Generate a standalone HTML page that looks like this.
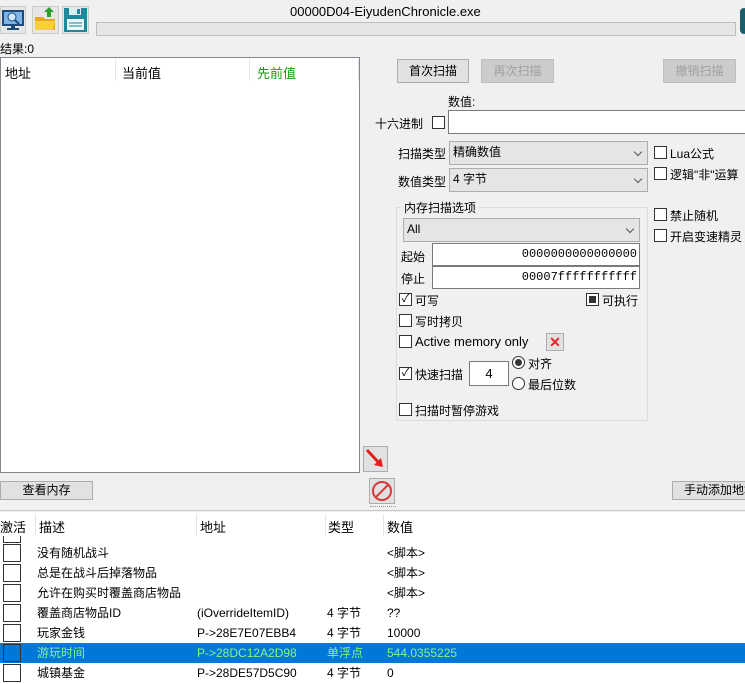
<!DOCTYPE html>
<html><head><meta charset="utf-8">
<style>
*{margin:0;padding:0;box-sizing:border-box}
body{width:745px;height:684px;overflow:hidden;background:#f0f0f0;position:relative;font-family:"Liberation Sans","Noto Sans CJK SC",sans-serif;font-size:12px;color:#000}
.a{position:absolute;white-space:nowrap}
.btn{position:absolute;background:#e1e1e1;border:1px solid #adadad;text-align:center;line-height:22px;white-space:nowrap;overflow:hidden}
.dis{color:#a0a0a0;background:#cccccc;border-color:#bfbfbf}
.inp{position:absolute;background:#fff;border:1px solid #7a7a7a}
.cb{position:absolute;width:13px;height:13px;border:1px solid #333;background:#fff}
.combo{position:absolute;background:#e5e5e5;border:1px solid #adadad;line-height:21px;padding-left:3px}
.combo:after{content:"";position:absolute;right:6px;top:7px;width:5px;height:5px;border-right:1px solid #555;border-bottom:1px solid #555;transform:rotate(45deg)}
.row{position:absolute;left:0;width:745px;height:20px;line-height:20px}
.row .c{position:absolute;left:3px;top:1px;width:18px;height:18px;border:1px solid #333;background:#fff}
.row span{position:absolute}
</style></head><body>
<div class="a" style="left:0;top:6px;width:26px;height:28px;background:#e6e6e6;border:1px solid #ccc">
<svg width="24" height="26" viewBox="0 0 24 26"><rect x="2" y="4" width="20" height="14" fill="#7fb4e6" stroke="#1d4c7c" stroke-width="2"/><circle cx="11" cy="10" r="4" fill="#cde8ff" stroke="#1d4c7c"/><line x1="14" y1="13" x2="18" y2="17" stroke="#1d4c7c" stroke-width="2"/><rect x="10" y="18" width="4" height="3" fill="#1d4c7c"/><rect x="6" y="21" width="12" height="2" fill="#1d4c7c"/></svg></div>
<div class="a" style="left:32px;top:6px;width:27px;height:28px;background:#e6e6e6;border:1px solid #ccc">
<svg width="25" height="26" viewBox="0 0 25 26"><path d="M2 10h8l2 2h10v11H2z" fill="#e6a817"/><path d="M2 14h20l-2 9H2z" fill="#f7cf3c"/><path d="M14 10V5h-3l5-5 5 5h-3v5z" fill="#2ca02c"/></svg></div>
<div class="a" style="left:62px;top:6px;width:27px;height:28px;background:#e6e6e6;border:1px solid #ccc">
<svg width="25" height="26" viewBox="0 0 25 26"><rect x="1" y="1" width="23" height="24" fill="#1c8a9a"/><rect x="6" y="1" width="12" height="7" fill="#d9eef0"/><rect x="14" y="2" width="3" height="5" fill="#1c8a9a"/><rect x="4" y="12" width="17" height="11" fill="#e8f6f6"/><line x1="6" y1="16" x2="19" y2="16" stroke="#1c8a9a"/><line x1="6" y1="19" x2="19" y2="19" stroke="#1c8a9a"/></svg></div>
<div class="a" style="left:290px;top:4px;font-size:13px">00000D04-EiyudenChronicle.exe</div>
<div class="a" style="left:96px;top:22px;width:640px;height:14px;background:#e6e6e6;border:1px solid #bcbcbc"></div>
<div class="a" style="left:740px;top:8px;width:8px;height:26px;background:#1b5d6b;border-radius:4px"></div>
<div class="a" style="left:0;top:40px">结果:0</div>
<div class="a" style="left:0;top:57px;width:360px;height:416px;background:#fff;border:1px solid #828790"></div>
<div class="a" style="left:5px;top:63px;font-size:13px">地址</div>
<div class="a" style="left:115px;top:59px;width:1px;height:22px;background:#e5e5e5"></div>
<div class="a" style="left:122px;top:63px;font-size:13px">当前值</div>
<div class="a" style="left:249px;top:59px;width:1px;height:22px;background:#e5e5e5"></div>
<div class="a" style="left:257px;top:63px;font-size:13px;color:#1a9a1a">先前值</div>
<div class="a" style="left:358px;top:59px;width:1px;height:22px;background:#e5e5e5"></div>
<div class="btn" style="left:397px;top:59px;width:72px;height:24px">首次扫描</div>
<div class="btn dis" style="left:481px;top:59px;width:73px;height:24px">再次扫描</div>
<div class="btn dis" style="left:663px;top:59px;width:73px;height:24px">撤销扫描</div>
<div class="a" style="left:448px;top:93px">数值:</div>
<div class="a" style="left:375px;top:115px">十六进制</div>
<div class="cb" style="left:432px;top:116px"></div>
<div class="inp" style="left:448px;top:110px;width:300px;height:24px"></div>
<div class="a" style="left:398px;top:145px">扫描类型</div>
<div class="combo" style="left:449px;top:141px;width:199px;height:24px">精确数值</div>
<div class="a" style="left:398px;top:173px">数值类型</div>
<div class="combo" style="left:449px;top:168px;width:199px;height:24px">4 字节</div>
<div class="cb" style="left:654px;top:146px"></div><div class="a" style="left:670px;top:145px">Lua公式</div>
<div class="cb" style="left:654px;top:167px"></div><div class="a" style="left:670px;top:166px">逻辑"非"运算</div>
<div class="cb" style="left:654px;top:208px"></div><div class="a" style="left:670px;top:207px">禁止随机</div>
<div class="cb" style="left:654px;top:229px"></div><div class="a" style="left:670px;top:228px">开启变速精灵</div>
<div class="a" style="left:396px;top:207px;width:252px;height:214px;border:1px solid #dcdcdc"></div>
<div class="a" style="left:401px;top:199px;background:#f0f0f0;padding:0 3px">内存扫描选项</div>
<div class="combo" style="left:403px;top:218px;width:237px;height:24px">All</div>
<div class="a" style="left:401px;top:248px">起始</div>
<div class="inp" style="left:432px;top:243px;width:208px;height:23px;text-align:right;padding-right:2px;line-height:21px;font-family:'Liberation Mono',monospace;font-size:12px">0000000000000000</div>
<div class="a" style="left:401px;top:270px">停止</div>
<div class="inp" style="left:432px;top:266px;width:208px;height:23px;text-align:right;padding-right:2px;line-height:21px;font-family:'Liberation Mono',monospace;font-size:12px">00007fffffffffff</div>
<div class="cb" style="left:399px;top:293px;font-size:11px;line-height:10px;text-align:center">✓</div><div class="a" style="left:415px;top:292px">可写</div>
<div class="cb" style="left:586px;top:293px"><div style="margin:2px;width:7px;height:7px;background:#333"></div></div><div class="a" style="left:602px;top:292px">可执行</div>
<div class="cb" style="left:399px;top:314px"></div><div class="a" style="left:415px;top:313px">写时拷贝</div>
<div class="cb" style="left:399px;top:335px"></div><div class="a" style="left:415px;top:334px;font-size:13px">Active memory only</div>
<div class="a" style="left:546px;top:333px;width:18px;height:18px;background:#e1e1e1;border:1px solid #adadad;color:#e8202a;text-align:center;line-height:16px;font-size:14px;font-weight:bold">✕</div>
<div class="cb" style="left:399px;top:367px;font-size:11px;line-height:10px;text-align:center">✓</div><div class="a" style="left:415px;top:366px">快速扫描</div>
<div class="inp" style="left:469px;top:361px;width:40px;height:25px;text-align:center;line-height:23px;font-size:13px">4</div>
<div class="a" style="left:512px;top:356px;width:13px;height:13px;border:1px solid #333;border-radius:50%;background:#fff"><div style="margin:2px;width:7px;height:7px;border-radius:50%;background:#333"></div></div><div class="a" style="left:528px;top:355px">对齐</div>
<div class="a" style="left:512px;top:377px;width:13px;height:13px;border:1px solid #333;border-radius:50%;background:#fff"></div><div class="a" style="left:528px;top:376px">最后位数</div>
<div class="cb" style="left:399px;top:403px"></div><div class="a" style="left:415px;top:402px">扫描时暂停游戏</div>
<div class="a" style="left:363px;top:446px;width:25px;height:26px;background:#e1e1e1;border:1px solid #adadad">
<svg width="23" height="24"><line x1="3" y1="3" x2="16" y2="17" stroke="#e02020" stroke-width="3"/><path d="M19 20l-9-2 7-7z" fill="#e02020"/></svg></div>
<div class="a" style="left:369px;top:478px;width:26px;height:26px;background:#e1e1e1;border:1px solid #adadad">
<svg width="24" height="24"><circle cx="12" cy="12" r="9" fill="none" stroke="#d83a3a" stroke-width="2"/><line x1="6" y1="18" x2="18" y2="6" stroke="#d83a3a" stroke-width="2"/></svg></div>
<div class="btn" style="left:0;top:481px;width:93px;height:19px;line-height:17px">查看内存</div>
<div class="btn" style="left:672px;top:481px;width:80px;height:19px;line-height:17px;text-align:left;padding-left:11px">手动添加地址</div>
<div class="a" style="left:0;top:510px;width:745px;height:1px;background:#c8c8c8"></div>
<div class="a" style="left:370px;top:506px;width:26px;height:2px;border-top:1px dotted #999"></div>
<div class="a" style="left:0;top:512px;width:745px;height:172px;background:#fff"></div>
<div class="a" style="left:0;top:517px;font-size:13px">激活</div>
<div class="a" style="left:35px;top:514px;width:1px;height:22px;background:#e5e5e5"></div>
<div class="a" style="left:39px;top:517px;font-size:13px">描述</div>
<div class="a" style="left:196px;top:514px;width:1px;height:22px;background:#e5e5e5"></div>
<div class="a" style="left:200px;top:517px;font-size:13px">地址</div>
<div class="a" style="left:325px;top:514px;width:1px;height:22px;background:#e5e5e5"></div>
<div class="a" style="left:328px;top:517px;font-size:13px">类型</div>
<div class="a" style="left:383px;top:514px;width:1px;height:22px;background:#e5e5e5"></div>
<div class="a" style="left:387px;top:517px;font-size:13px">数值</div>
<div class="a" style="left:3px;top:536px;width:18px;height:7px;border:1px solid #333;border-top:none"></div>
<div class="row" style="top:543px"><div class="c"></div><span style="left:37px">没有随机战斗</span><span style="left:387px">&lt;脚本&gt;</span></div>
<div class="row" style="top:563px"><div class="c"></div><span style="left:37px">总是在战斗后掉落物品</span><span style="left:387px">&lt;脚本&gt;</span></div>
<div class="row" style="top:583px"><div class="c"></div><span style="left:37px">允许在购买时覆盖商店物品</span><span style="left:387px">&lt;脚本&gt;</span></div>
<div class="row" style="top:603px"><div class="c"></div><span style="left:37px">覆盖商店物品ID</span><span style="left:197px">(iOverrideItemID)</span><span style="left:327px">4 字节</span><span style="left:387px">??</span></div>
<div class="row" style="top:623px"><div class="c"></div><span style="left:37px">玩家金钱</span><span style="left:197px">P-&gt;28E7E07EBB4</span><span style="left:327px">4 字节</span><span style="left:387px">10000</span></div>
<div class="row" style="top:643px;background:#0078d7;color:#8af58a"><div class="c" style="background:#0078d7"></div><span style="left:37px">游玩时间</span><span style="left:197px">P-&gt;28DC12A2D98</span><span style="left:327px">单浮点</span><span style="left:387px">544.0355225</span></div>
<div class="row" style="top:663px"><div class="c"></div><span style="left:37px">城镇基金</span><span style="left:197px">P-&gt;28DE57D5C90</span><span style="left:327px">4 字节</span><span style="left:387px">0</span></div>
</body></html>
